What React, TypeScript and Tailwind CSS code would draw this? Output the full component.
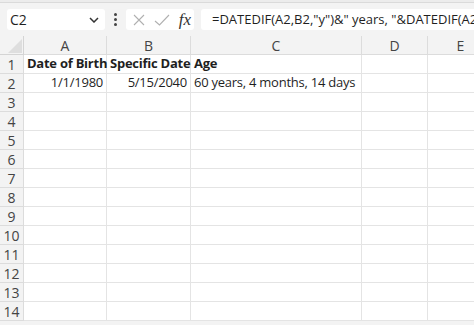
import React from "react";

const cols = [
  { key: "A", w: 83 },
  { key: "B", w: 84 },
  { key: "C", w: 171 },
  { key: "D", w: 66 },
  { key: "E", w: 66 },
];

const rows = Array.from({ length: 14 }, (_, i) => i + 1);

const data: Record<string, { text: string; bold?: boolean; right?: boolean }> = {
  A1: { text: "Date of Birth", bold: true },
  B1: { text: "Specific Date", bold: true },
  C1: { text: "Age", bold: true },
  A2: { text: "1/1/1980", right: true },
  B2: { text: "5/15/2040", right: true },
  C2: { text: "60 years, 4 months, 14 days" },
};

export default function App() {
  return (
    <div
      className="w-[474px] h-[325px] overflow-hidden bg-[#f3f3f3] text-[#1f1f1f]"
      style={{ fontFamily: "'Open Sans', 'Noto Sans', sans-serif" }}
    >
      <div className="h-[3px] bg-[#ececec] border-b border-[#dadada]" />
      <div className="h-[33px] flex items-center">
        <div className="ml-[7px] w-[98px] h-[21px] bg-white rounded-[3px] flex items-center justify-between pl-[3px] pr-[6px]">
          <span className="text-[14px] leading-none">C2</span>
          <svg width="10" height="6" viewBox="0 0 10 6">
            <path d="M1 1 L5 5 L9 1" fill="none" stroke="#333" strokeWidth="1.5" />
          </svg>
        </div>
        <div className="w-[21px] flex flex-col items-center justify-center gap-[2px]">
          <span className="w-[3px] h-[3px] rounded-full bg-[#444]" />
          <span className="w-[3px] h-[3px] rounded-full bg-[#444]" />
          <span className="w-[3px] h-[3px] rounded-full bg-[#444]" />
        </div>
        <div className="w-[68px] h-[21px] bg-white rounded-[3px] flex items-center pl-[6px] pr-[3px]">
          <svg width="14" height="14" viewBox="0 0 14 14">
            <path d="M2 2 L12 12 M12 2 L2 12" stroke="#b0b0b0" strokeWidth="1.1" fill="none" />
          </svg>
          <svg width="16" height="14" viewBox="0 0 16 14" className="ml-[8px]">
            <path d="M1 8 L5.5 12 L15 2" stroke="#b0b0b0" strokeWidth="1.1" fill="none" />
          </svg>
          <span
            className="ml-auto text-[17px] italic leading-none text-[#333]"
            style={{ fontFamily: "'Liberation Serif', 'DejaVu Serif', serif" }}
          >
            fx
          </span>
        </div>
        <div className="ml-[7px] flex-1 h-[21px] bg-white rounded-l-[3px] flex items-center pl-[11px] overflow-hidden whitespace-nowrap">
          <span className="text-[13px] leading-none">
            =DATEDIF(A2,B2,"y")&amp;" years, "&amp;DATEDIF(A2,B2,"ym")&amp;" months, "
          </span>
        </div>
      </div>
      <div className="grid grid-cols-[24px_83px_84px_171px_66px_66px] auto-rows-[19px] bg-white">
        <div className="relative bg-[#f3f3f3] border-r border-b border-[#d4d4d4] overflow-hidden">
          <svg width="24" height="19" viewBox="0 0 24 19" className="absolute inset-0">
            <path d="M22 3 L22 17 L8 17 Z" fill="#dedede" />
          </svg>
        </div>
        {cols.map((c) => (
          <div
            key={c.key}
            className="bg-[#f3f3f3] border-r border-b border-[#dcdcdc] flex items-center justify-center text-[14px] text-[#444]"
          >
            {c.key}
          </div>
        ))}
        {rows.map((r) => (
          <React.Fragment key={r}>
            <div className="bg-[#f3f3f3] border-r border-b border-[#dcdcdc] flex items-center justify-center text-[14px] text-[#444]">
              {r}
            </div>
            {cols.map((c) => {
              const d = data[c.key + r];
              return (
                <div
                  key={c.key}
                  className={`border-r border-b border-[#e4e4e4] flex items-center whitespace-nowrap text-[13px] tracking-[-0.25px] px-[3px] ${
                    d?.right ? "justify-end" : "justify-start"
                  } ${d?.bold ? "font-bold" : ""}`}
                >
                  {d?.text}
                </div>
              );
            })}
          </React.Fragment>
        ))}
      </div>
    </div>
  );
}
